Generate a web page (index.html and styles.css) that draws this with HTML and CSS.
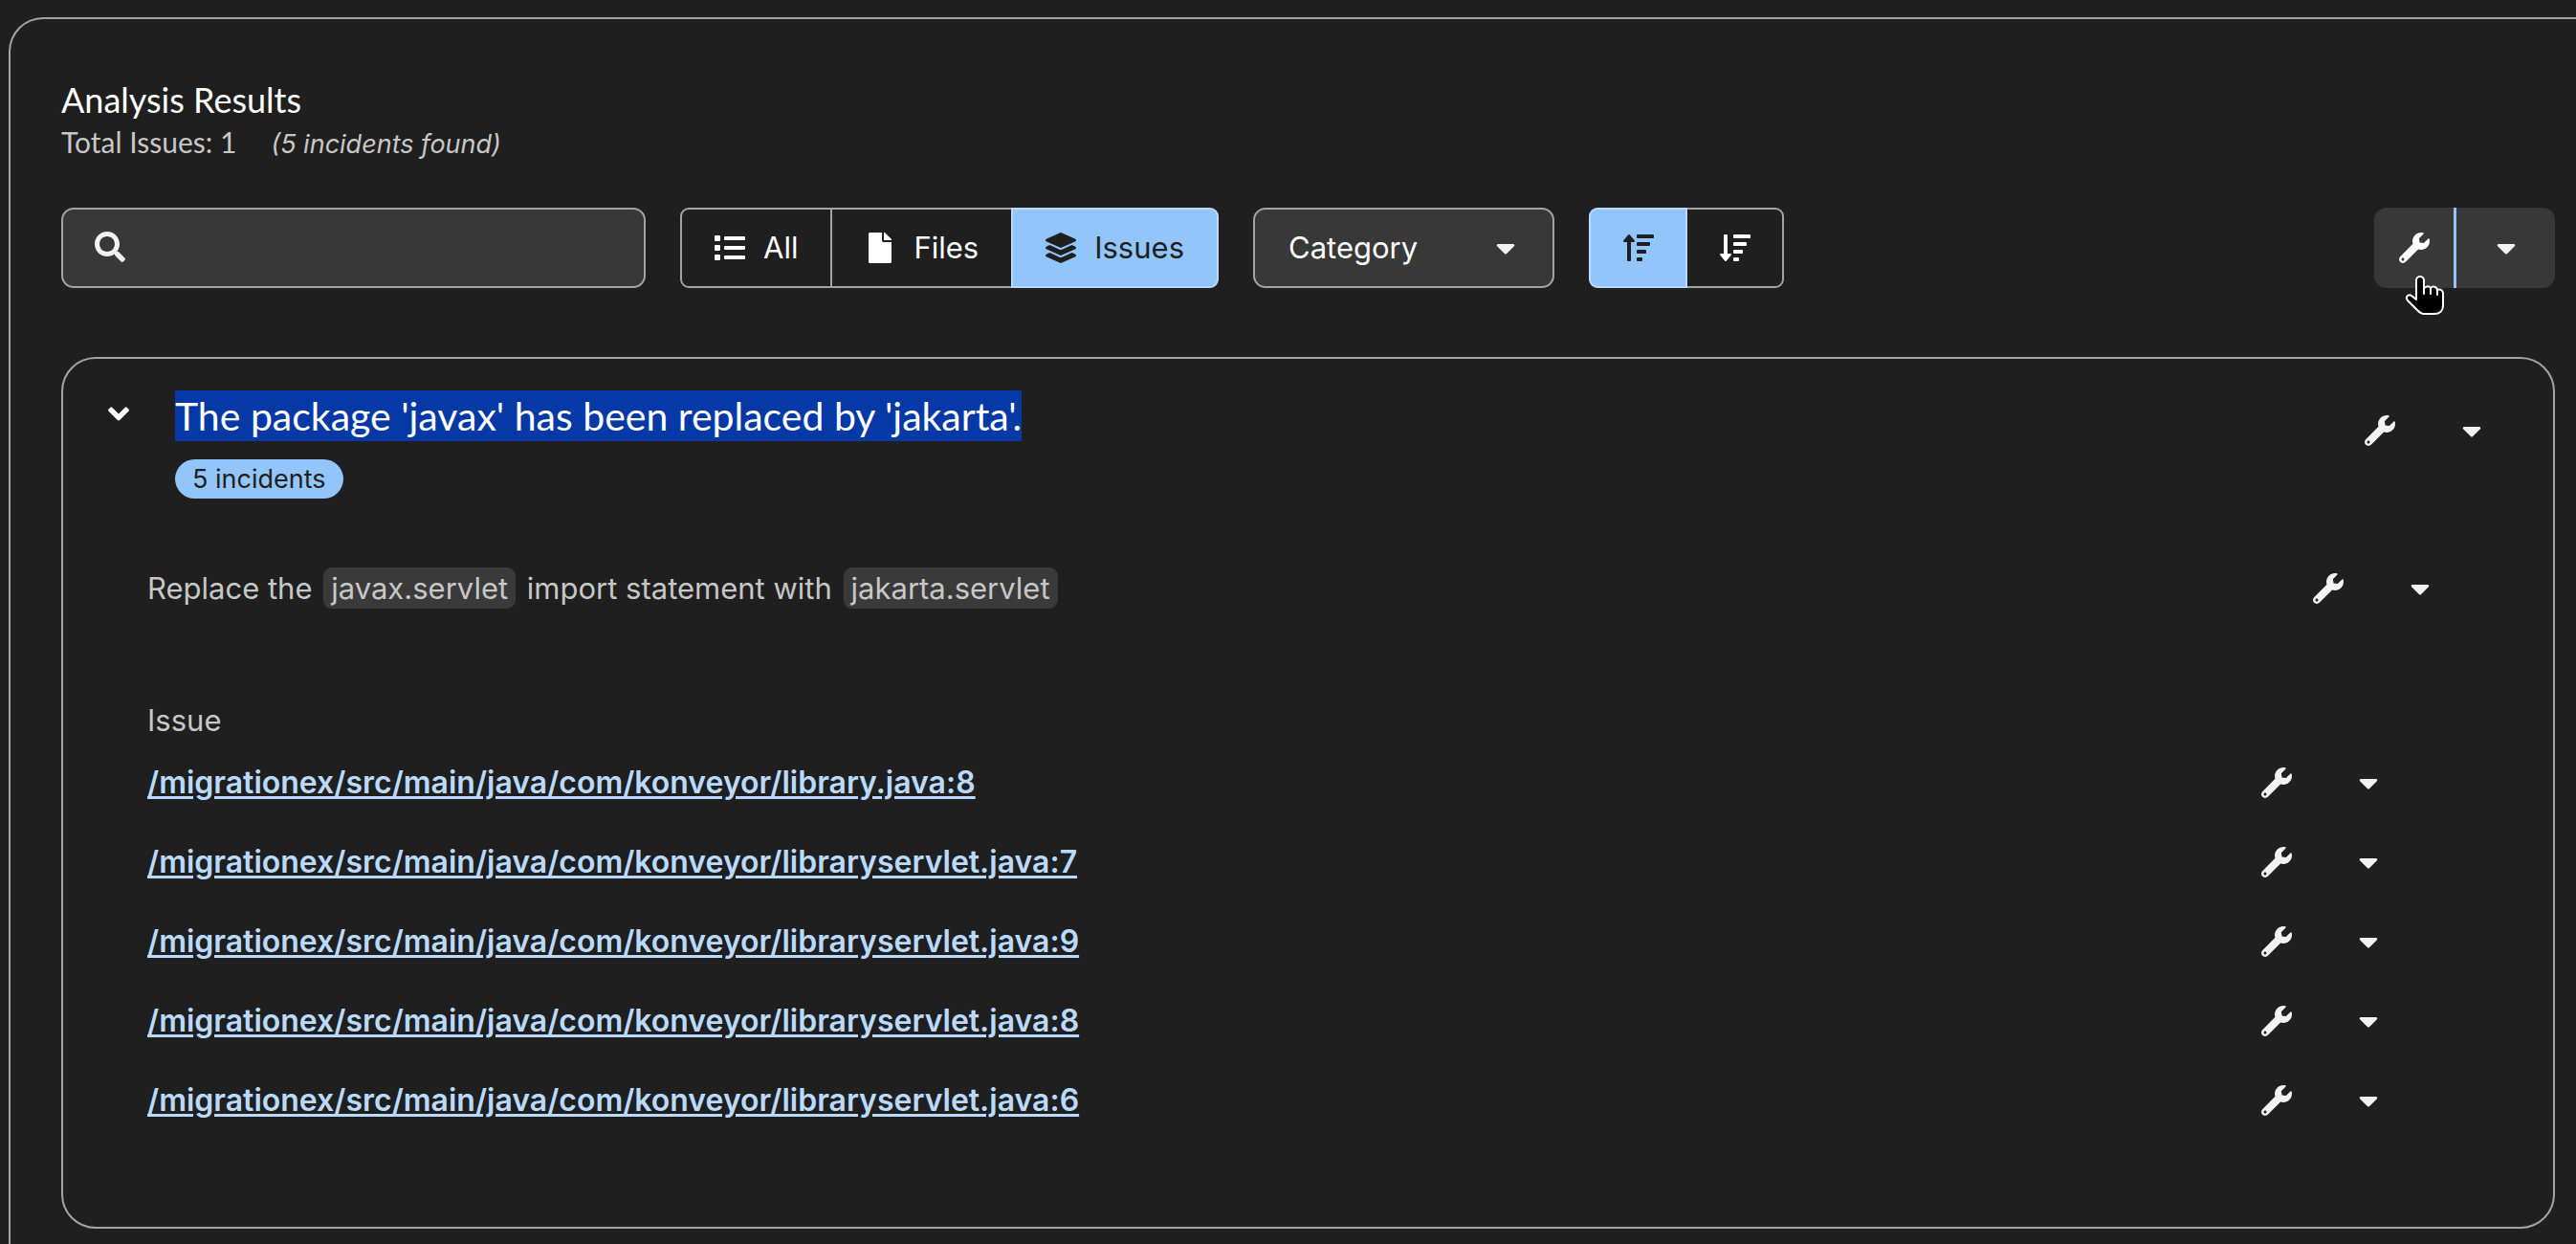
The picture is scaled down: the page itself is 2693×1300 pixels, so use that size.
FILE: index.html
```html
<!DOCTYPE html>
<html lang="en">
<head>
<meta charset="utf-8">
<meta name="viewport" content="width=device-width, initial-scale=1">
<title>Analysis Results</title>
<link rel="stylesheet" href="styles.css">
</head>
<body>
<svg class="sprite" aria-hidden="true">
  <symbol id="search" viewBox="0 0 512 512"><path d="M505 442.700L405.300 343c-4.500-4.500-10.600-7-17-7H372c27.600-35.300 44-79.700 44-128C416 93.100 322.900 0 208 0S0 93.100 0 208s93.100 208 208 208c48.300 0 92.700-16.400 128-44v16.300c0 6.400 2.500 12.500 7 17l99.700 99.700c9.400 9.400 24.600 9.400 33.900 0l28.300-28.300c9.400-9.400 9.400-24.600.1-34zM208 336c-70.700 0-128-57.200-128-128 0-70.700 57.200-128 128-128 70.700 0 128 57.200 128 128 0 70.700-57.200 128-128 128z"/></symbol>
  <symbol id="wrench" viewBox="0 0 512 512"><path d="M507.730 109.100c-2.240-9.030-13.540-12.090-20.120-5.510l-74.360 74.360-67.880-11.310-11.310-67.880 74.360-74.360c6.620-6.620 3.430-17.900-5.660-20.160-47.380-11.740-99.550.91-136.580 37.930-39.640 39.640-50.550 97.100-34.050 147.200L18.740 402.760c-24.990 24.990-24.990 65.510 0 90.500 24.990 24.990 65.510 24.990 90.500 0l213.210-213.210c50.120 16.710 107.470 5.680 147.370-34.220 37.070-37.070 49.700-89.320 37.910-136.730zM64 472c-13.250 0-24-10.750-24-24 0-13.260 10.750-24 24-24s24 10.740 24 24c0 13.250-10.750 24-24 24z"/></symbol>
  <symbol id="caret" viewBox="0 0 320 512"><path d="M31.300 192h257.300c17.800 0 26.700 21.500 14.100 34.100L174.100 354.800c-7.800 7.800-20.500 7.800-28.300 0L17.200 226.100C4.600 213.500 13.500 192 31.300 192z"/></symbol>
  <symbol id="chevron" viewBox="0 0 320 512"><path d="M143 352.300L7 216.300c-9.400-9.400-9.400-24.600 0-33.900l22.600-22.600c9.400-9.400 24.600-9.400 33.900 0l96.400 96.400 96.400-96.400c9.400-9.400 24.600-9.400 33.900 0l22.600 22.600c9.400 9.400 9.400 24.600 0 33.900l-136 136c-9.200 9.400-24.400 9.400-33.800 0z"/></symbol>
  <symbol id="list" viewBox="0 0 512 512"><path d="M80 368H16a16 16 0 0 0-16 16v64a16 16 0 0 0 16 16h64a16 16 0 0 0 16-16v-64a16 16 0 0 0-16-16zm0-320H16A16 16 0 0 0 0 64v64a16 16 0 0 0 16 16h64a16 16 0 0 0 16-16V64a16 16 0 0 0-16-16zm0 160H16a16 16 0 0 0-16 16v64a16 16 0 0 0 16 16h64a16 16 0 0 0 16-16v-64a16 16 0 0 0-16-16zm416 176H176a16 16 0 0 0-16 16v32a16 16 0 0 0 16 16h320a16 16 0 0 0 16-16v-32a16 16 0 0 0-16-16zm0-320H176a16 16 0 0 0-16 16v32a16 16 0 0 0 16 16h320a16 16 0 0 0 16-16V80a16 16 0 0 0-16-16zm0 160H176a16 16 0 0 0-16 16v32a16 16 0 0 0 16 16h320a16 16 0 0 0 16-16v-32a16 16 0 0 0-16-16z"/></symbol>
  <symbol id="file" viewBox="0 0 384 512"><path d="M224 136V0H24C10.700 0 0 10.700 0 24v464c0 13.300 10.700 24 24 24h336c13.300 0 24-10.700 24-24V160H248c-13.200 0-24-10.800-24-24zm160-14.100v6.100H256V0h6.100c6.400 0 12.500 2.500 17 7l97.900 98c4.500 4.500 7 10.600 7 16.900z"/></symbol>
  <symbol id="layers" viewBox="0 0 512 512"><path d="M12.410 148.020l232.940 105.670c6.800 3.090 14.490 3.090 21.290 0l232.940-105.670c16.550-7.510 16.550-32.520 0-40.030L266.650 2.310a25.607 25.607 0 0 0-21.290 0L12.410 107.980c-16.550 7.510-16.550 32.530 0 40.040zm487.180 88.280l-58.090-26.330-161.640 73.270c-7.560 3.430-15.590 5.170-23.860 5.170s-16.290-1.740-23.860-5.170L70.510 209.970l-58.100 26.330c-16.550 7.500-16.550 32.500 0 40l232.940 105.590c6.800 3.080 14.490 3.080 21.290 0L499.590 276.300c16.550-7.500 16.550-32.500 0-40zm0 127.800l-57.870-26.230-161.860 73.370c-7.560 3.430-15.590 5.170-23.860 5.170s-16.290-1.740-23.860-5.170L70.290 337.870 12.410 364.100c-16.550 7.500-16.550 32.500 0 40l232.940 105.590c6.800 3.080 14.490 3.080 21.290 0L499.590 404.100c16.550-7.500 16.550-32.500 0-40z"/></symbol>
  <symbol id="sort-up" viewBox="0 0 512 512"><path d="M16 160h48v304a16 16 0 0 0 16 16h32a16 16 0 0 0 16-16V160h48c14.210 0 21.380-17.240 11.310-27.310l-80-96a16 16 0 0 0-22.620 0l-80 96C-5.350 142.740 1.780 160 16 160z"/><rect x="224" y="32" width="288" height="64" rx="16"/><rect x="224" y="160" width="224" height="64" rx="16"/><rect x="224" y="288" width="160" height="64" rx="16"/><rect x="224" y="416" width="96" height="64" rx="16"/></symbol>
  <symbol id="sort-down" viewBox="0 0 512 512"><path d="M176 352h-48V48a16 16 0 0 0-16-16H80a16 16 0 0 0-16 16v304H16c-14.190 0-21.360 17.240-11.290 27.310l80 96a16 16 0 0 0 22.620 0l80-96C197.350 369.260 190.220 352 176 352z"/><rect x="224" y="32" width="288" height="64" rx="16"/><rect x="224" y="160" width="224" height="64" rx="16"/><rect x="224" y="288" width="160" height="64" rx="16"/><rect x="224" y="416" width="96" height="64" rx="16"/></symbol>
</svg>

<main class="panel">
  <header class="summary">
    <h1 class="summary-title">Analysis Results</h1>
    <p class="summary-line"><span>Total Issues: 1</span><em class="summary-note">(5 incidents found)</em></p>
  </header>

  <div class="toolbar">
    <label class="search">
      <svg class="icon"><use href="#search"/></svg>
      <input class="search-input" type="text" aria-label="Search">
    </label>
    <div class="toggle-group" role="group" aria-label="Group by">
      <button class="toggle" type="button"><svg class="icon"><use href="#list"/></svg>All</button>
      <button class="toggle" type="button"><svg class="icon icon-file"><use href="#file"/></svg>Files</button>
      <button class="toggle toggle-on" type="button" aria-pressed="true"><svg class="icon"><use href="#layers"/></svg>Issues</button>
    </div>
    <div class="picker">
      <select class="picker-select" aria-label="Filter by"><option>Category</option></select>
      <svg class="icon-caret picker-caret"><use href="#caret"/></svg>
    </div>
    <div class="toggle-group" role="group" aria-label="Sort order">
      <button class="toggle toggle-sort toggle-on" type="button" aria-label="Sort ascending" aria-pressed="true"><svg class="icon"><use href="#sort-up"/></svg></button>
      <button class="toggle toggle-sort" type="button" aria-label="Sort descending"><svg class="icon"><use href="#sort-down"/></svg></button>
    </div>
    <div class="split split-filled">
      <button class="split-action" type="button" aria-label="Fix all"><svg class="icon"><use href="#wrench"/></svg></button>
      <button class="split-menu" type="button" aria-label="More fix options"><svg class="icon-caret"><use href="#caret"/></svg></button>
      <svg class="pointer" viewBox="0 0 42 44" aria-hidden="true"><path d="M12 26V6a4 4 0 0 1 8 0v9a4 4 0 0 1 7-1 4 4 0 0 1 7 2 4 4 0 0 1 6 3v13c0 6-4 9-9 9H20c-3 0-5-2-7-4L3 27c-3-4 1-7 4-5z"/><path class="pointer-crease" d="M20 14v6M27 14v6M34 16v5"/></svg>
    </div>
  </div>

  <section class="card">
    <div class="card-head">
      <button class="expand" type="button" aria-label="Collapse issue" aria-expanded="true"><svg class="icon-chevron"><use href="#chevron"/></svg></button>
      <div class="card-heading">
        <h2 class="card-title"><span class="selected">The package 'javax' has been replaced by 'jakarta'.</span></h2>
        <span class="badge">5 incidents</span>
      </div>
      <div class="split">
        <button class="split-action" type="button" aria-label="Fix issue"><svg class="icon"><use href="#wrench"/></svg></button>
        <button class="split-menu" type="button" aria-label="More fix options"><svg class="icon-caret"><use href="#caret"/></svg></button>
      </div>
    </div>

    <div class="message">
      <p class="message-text">Replace the <code class="chip">javax.servlet</code> import statement with <code class="chip">jakarta.servlet</code></p>
      <div class="split">
        <button class="split-action" type="button" aria-label="Fix incidents"><svg class="icon"><use href="#wrench"/></svg></button>
        <button class="split-menu" type="button" aria-label="More fix options"><svg class="icon-caret"><use href="#caret"/></svg></button>
      </div>
    </div>

    <table class="incidents">
      <thead><tr><th scope="col">Issue</th><td></td></tr></thead>
      <tbody>
        <tr><td><a href="#l8">/migrationex/src/main/java/com/konveyor/library.java:8</a></td><td class="actions"><div class="split"><button class="split-action" type="button" aria-label="Fix incident"><svg class="icon"><use href="#wrench"/></svg></button><button class="split-menu" type="button" aria-label="More fix options"><svg class="icon-caret"><use href="#caret"/></svg></button></div></td></tr>
        <tr><td><a href="#s7">/migrationex/src/main/java/com/konveyor/libraryservlet.java:7</a></td><td class="actions"><div class="split"><button class="split-action" type="button" aria-label="Fix incident"><svg class="icon"><use href="#wrench"/></svg></button><button class="split-menu" type="button" aria-label="More fix options"><svg class="icon-caret"><use href="#caret"/></svg></button></div></td></tr>
        <tr><td><a href="#s9">/migrationex/src/main/java/com/konveyor/libraryservlet.java:9</a></td><td class="actions"><div class="split"><button class="split-action" type="button" aria-label="Fix incident"><svg class="icon"><use href="#wrench"/></svg></button><button class="split-menu" type="button" aria-label="More fix options"><svg class="icon-caret"><use href="#caret"/></svg></button></div></td></tr>
        <tr><td><a href="#s8">/migrationex/src/main/java/com/konveyor/libraryservlet.java:8</a></td><td class="actions"><div class="split"><button class="split-action" type="button" aria-label="Fix incident"><svg class="icon"><use href="#wrench"/></svg></button><button class="split-menu" type="button" aria-label="More fix options"><svg class="icon-caret"><use href="#caret"/></svg></button></div></td></tr>
        <tr><td><a href="#s6">/migrationex/src/main/java/com/konveyor/libraryservlet.java:6</a></td><td class="actions"><div class="split"><button class="split-action" type="button" aria-label="Fix incident"><svg class="icon"><use href="#wrench"/></svg></button><button class="split-menu" type="button" aria-label="More fix options"><svg class="icon-caret"><use href="#caret"/></svg></button></div></td></tr>
      </tbody>
    </table>
  </section>
</main>
</body>
</html>
```
FILE: styles.css
```css
:root {
  --bg: #1f1f1f;
  --raised: #383838;
  --line: #a3a3a3;
  --text: #ffffff;
  --muted: #c7c7c7;
  --icon: #f2f2f2;
  --accent: #92c5f9;
  --accent-light: #b9dafc;
}

* { box-sizing: border-box; }

body {
  margin: 0;
  overflow-x: hidden;
  background: var(--bg);
  color: var(--text);
  font: 400 31px/44px Inter, "Liberation Sans", sans-serif;
}

h1, h2, p { margin: 0; font-weight: 400; }

button, input, select {
  margin: 0;
  padding: 0;
  border: 0;
  background: none;
  color: inherit;
  font: inherit;
}

svg { display: block; fill: currentColor; flex: none; }

.sprite { display: none; }
.icon { width: 32px; height: 32px; }
.icon-file { width: 24px; }
.icon-caret { width: 20px; height: 32px; color: var(--icon); }
.icon-chevron { width: 22px; height: 35px; }

.panel {
  min-height: calc(100vh - 18px);
  margin: 18px 0 0 9px;
  padding: 62px 22px 12px 53px;
  border: 2px solid var(--line);
  border-width: 2px 0 0 2px;
  border-radius: 36px 0 0 0;
}

/* Summary */
.summary { margin-bottom: 44px; }
.summary-title, .summary-line, .card-title { font-family: Lato, "Open Sans", sans-serif; }
.summary-title { font-size: 36px; line-height: 44px; }
.summary-line { display: flex; align-items: baseline; gap: 36px; color: var(--muted); font-size: 30px; line-height: 45px; }
.summary-note { font-family: Inter, "Liberation Sans", sans-serif; font-size: 27px; }

/* Toolbar */
.toolbar { display: flex; align-items: center; gap: 36px; height: 84px; margin-bottom: 72px; }

.search {
  display: flex;
  align-items: center;
  gap: 20px;
  flex: 0 0 611px;
  height: 84px;
  padding: 0 30px 2px 33px;
  border: 2px solid var(--line);
  border-radius: 13px;
  background: var(--raised);
  color: var(--icon);
}
.search-input { flex: 1; min-width: 0; height: 60px; outline: none; }

.toggle-group { display: flex; }
.toggle {
  display: flex;
  align-items: center;
  gap: 19px;
  height: 84px;
  padding: 0 34px;
  border: 2px solid var(--line);
}
.toggle + .toggle { margin-left: -2px; }
.toggle:first-child { border-radius: 9px 0 0 9px; }
.toggle:last-child { border-radius: 0 9px 9px 0; }
.toggle .icon-file { margin: 0 4px; }
.toggle-on { position: relative; border-color: var(--accent-light); background: var(--accent); color: var(--bg); }
.toggle-sort { width: 103px; justify-content: center; padding: 0; }

.picker { display: grid; align-items: center; width: 315px; }
.picker-select {
  grid-area: 1 / 1;
  appearance: none;
  height: 84px;
  padding: 0 80px 0 35px;
  border: 2px solid var(--line);
  border-radius: 13px;
  background: var(--raised);
}
.picker-caret { grid-area: 1 / 1; justify-self: end; margin-right: 41px; pointer-events: none; }

/* Wrench button with its menu */
.split { position: relative; display: flex; height: 84px; margin-left: auto; color: var(--icon); }
.split-action, .split-menu { display: flex; align-items: center; justify-content: center; }
.split-action { width: 83px; }
.split-menu { width: 106px; padding-left: 3px; }
.split-filled { border-radius: 13px; background: var(--raised); color: var(--text); }
.split-filled .split-menu { padding: 0; border-left: 3px solid var(--accent); }

.pointer { position: absolute; left: 32px; top: 70px; width: 42px; height: 44px; fill: #000; stroke: #fff; stroke-width: 2px; stroke-linejoin: round; }
.pointer-crease { fill: none; stroke-linecap: round; }

/* Issue card */
.card { padding: 33px 34px 91px 28px; border: 2px solid var(--line); border-radius: 36px; }
.card-head { display: flex; align-items: flex-start; }
.expand { display: flex; align-items: center; justify-content: center; width: 60px; height: 49px; margin-right: 29px; }
.card-title { font-size: 41px; line-height: 53px; }
.selected { display: inline-block; background: #0739a6; }
.badge {
  display: block;
  width: fit-content;
  margin-top: 19px;
  padding: 0 18px;
  border-radius: 21px;
  background: var(--accent);
  color: var(--bg);
  font-size: 27px;
  line-height: 41px;
}

.message { display: flex; align-items: center; margin: 52px 54px 73px 60px; color: var(--muted); }
.chip { margin: 0 3px; padding: 3px 8px; border-radius: 9px; background: #3a3a3a; font: inherit; }

.incidents { width: calc(100% - 168px); margin: 0 108px 0 60px; border-collapse: collapse; }
.incidents th, .incidents td { padding: 0; text-align: left; }
.incidents th { height: 46px; color: var(--muted); font-weight: 400; }
.incidents tbody tr { height: 83px; }
.incidents .split { height: 83px; }
.incidents .actions { width: 189px; }
.incidents a {
  color: var(--accent-light);
  font-size: 32px;
  font-weight: 600;
  text-decoration: underline;
  text-decoration-thickness: 3px;
  text-underline-offset: 3px;
}
```
